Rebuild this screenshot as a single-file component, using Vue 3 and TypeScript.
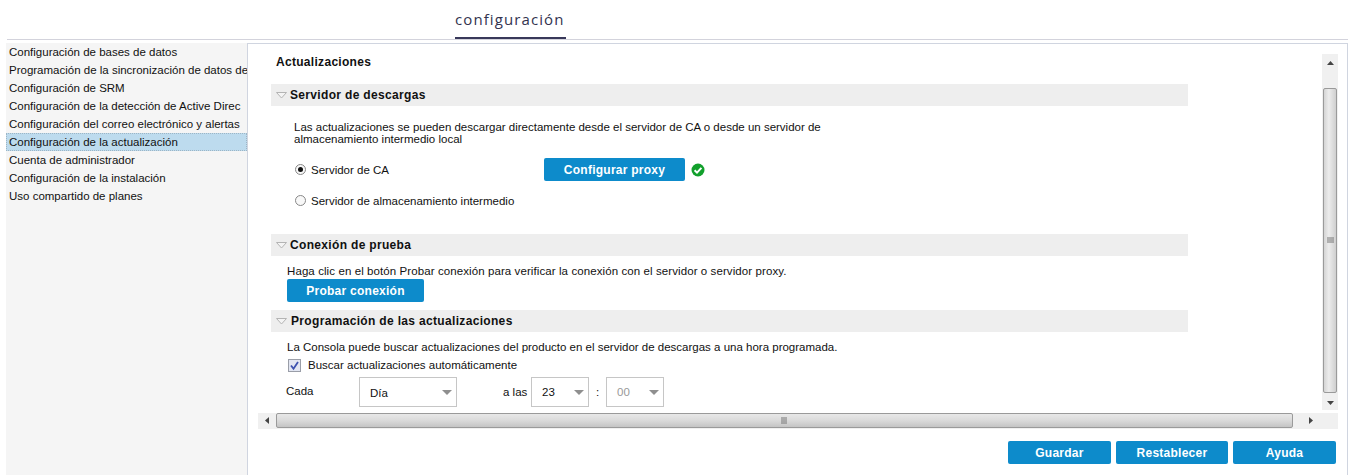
<script setup lang="ts">
const menu: string[] = [
  'Configuración de bases de datos',
  'Programación de la sincronización de datos de',
  'Configuración de SRM',
  'Configuración de la detección de Active Direc',
  'Configuración del correo electrónico y alertas',
  'Configuración de la actualización',
  'Cuenta de administrador',
  'Configuración de la instalación',
  'Uso compartido de planes',
]
const activeIndex = 5
</script>

<template>
  <div class="page">
    <header class="top">
      <div class="tab">configuración</div>
    </header>
    <div class="main">
      <nav class="side">
        <div
          v-for="(m, i) in menu"
          :key="m"
          class="item"
          :class="{ active: i === activeIndex }"
        >{{ m }}</div>
      </nav>
      <section class="panel">
        <div class="frame">
          <div class="frame-row">
            <div class="content">
              <h1 class="title">Actualizaciones</h1>

              <div class="bar first">
                <svg class="tri" width="11" height="7" viewBox="0 0 11 7"><path d="M0.5 0.5H10.5L5.5 6Z" fill="#f4f4f4" stroke="#b4b4b4"/></svg>
                <span>Servidor de descargas</span>
              </div>
              <p class="desc">Las actualizaciones se pueden descargar directamente desde el servidor de CA o desde un servidor de<br>almacenamiento intermedio local</p>
              <div class="radio-row one">
                <span class="radio on"></span>
                <span class="radio-label">Servidor de CA</span>
                <button class="btn proxy">Configurar proxy</button>
                <svg class="ok" width="14" height="14" viewBox="0 0 14 14"><circle cx="7" cy="7" r="6.5" fill="#12a02c"/><path d="M3.6 7.2L6 9.6L10.4 4.9" fill="none" stroke="#fff" stroke-width="2"/></svg>
              </div>
              <div class="radio-row two">
                <span class="radio"></span>
                <span class="radio-label">Servidor de almacenamiento intermedio</span>
              </div>

              <div class="bar second">
                <svg class="tri" width="11" height="7" viewBox="0 0 11 7"><path d="M0.5 0.5H10.5L5.5 6Z" fill="#f4f4f4" stroke="#b4b4b4"/></svg>
                <span>Conexión de prueba</span>
              </div>
              <p class="plain test">Haga clic en el botón Probar conexión para verificar la conexión con el servidor o servidor proxy.</p>
              <button class="btn test-btn">Probar conexión</button>

              <div class="bar third">
                <svg class="tri" width="11" height="7" viewBox="0 0 11 7"><path d="M0.5 0.5H10.5L5.5 6Z" fill="#f4f4f4" stroke="#b4b4b4"/></svg>
                <span>Programación de las actualizaciones</span>
              </div>
              <p class="plain sched">La Consola puede buscar actualizaciones del producto en el servidor de descargas a una hora programada.</p>
              <div class="check-row">
                <svg class="check" width="13" height="13" viewBox="0 0 13 13"><rect x="0.5" y="0.5" width="12" height="12" fill="#e2e6f2" stroke="#9a9ea8"/><path d="M3 6.5L5.5 9.8L10 3" fill="none" stroke="#3d52b0" stroke-width="1.8"/></svg>
                <span>Buscar actualizaciones automáticamente</span>
              </div>
              <div class="time-row">
                <span class="cada">Cada</span>
                <div class="select day"><span>Día</span><i class="caret"></i></div>
                <span class="alas">a las</span>
                <div class="select num"><span>23</span><i class="caret"></i></div>
                <span class="colon">:</span>
                <div class="select num off"><span>00</span><i class="caret"></i></div>
              </div>
            </div>
            <div class="vscroll">
              <div class="arrow-v"><svg width="7" height="4" viewBox="0 0 7 4"><path d="M3.5 0L7 4H0Z" fill="#444"/></svg></div>
              <div class="vthumb"><svg width="7" height="7" viewBox="0 0 7 7"><path d="M0 1H7M0 3H7M0 5H7" stroke="#777"/></svg></div>
              <div class="arrow-v"><svg width="7" height="4" viewBox="0 0 7 4"><path d="M0 0H7L3.5 4Z" fill="#444"/></svg></div>
            </div>
          </div>
          <div class="hscroll">
            <div class="arrow-h"><svg width="4" height="7" viewBox="0 0 4 7"><path d="M4 0V7L0 3.5Z" fill="#444"/></svg></div>
            <div class="hthumb"><svg width="7" height="7" viewBox="0 0 7 7"><path d="M1 0V7M3 0V7M5 0V7" stroke="#777"/></svg></div>
            <div class="arrow-h"><svg width="4" height="7" viewBox="0 0 4 7"><path d="M0 0L4 3.5L0 7Z" fill="#444"/></svg></div>
            <div class="corner"></div>
          </div>
        </div>
        <div class="actions">
          <button class="btn act guardar">Guardar</button>
          <button class="btn act rest">Restablecer</button>
          <button class="btn act guardar">Ayuda</button>
        </div>
      </section>
    </div>
  </div>
</template>

<style scoped>
.page {
  width: 1349px;
  height: 475px;
  overflow: hidden;
  display: flex;
  flex-direction: column;
  background: #fff;
  color: #111;
  font-family: "Liberation Sans", Arial, sans-serif;
  font-size: 11.5px;
}
.top {
  height: 40px;
  margin-left: 7px;
  width: 1341px;
  box-sizing: border-box;
  border-bottom: 1px solid #d3d3dc;
  padding-left: 448px;
  flex: none;
}
.tab {
  width: 111px;
  height: 39px;
  box-sizing: border-box;
  border-bottom: 2px solid #38385a;
  font-family: "Open Sans", sans-serif;
  font-size: 15px;
  font-weight: 500;
  letter-spacing: 1.1px;
  line-height: 38px;
  color: #33334f;
  white-space: nowrap;
}
.main {
  flex: 1;
  display: flex;
  margin-top: 3px;
  margin-left: 6px;
  min-height: 0;
}
.side {
  width: 241px;
  flex: none;
  background: #f5f5f5;
  overflow: hidden;
  box-sizing: border-box;
}
.item {
  height: 18px;
  line-height: 18px;
  padding-left: 3px;
  white-space: nowrap;
  box-sizing: border-box;
  color: #111;
}
.item.active {
  background: #bddbee;
  outline: 1px dotted #9db5c5;
  outline-offset: -1px;
}
.panel {
  width: 1101px;
  flex: none;
  box-sizing: border-box;
  border-left: 1px solid #d0d5e0;
  border-top: 1px solid #d0d5e0;
  border-right: 1px solid #d0d5e0;
  padding: 10px 11px 0 10px;
  display: flex;
  flex-direction: column;
}
.frame {
  width: 1080px;
  flex: none;
}
.frame-row {
  display: flex;
  height: 356px;
}
.content {
  width: 1064px;
  flex: none;
  padding-left: 13px;
  box-sizing: border-box;
}
.title {
  margin: 0;
  padding: 1px 0 0 5px;
  font-size: 12px;
  line-height: 14px;
  font-weight: 700;
  letter-spacing: 0.3px;
}
.bar {
  width: 917px;
  height: 22px;
  background: #eeeeee;
  display: flex;
  align-items: center;
  font-size: 12px;
  font-weight: 700;
  letter-spacing: 0.33px;
  color: #111;
}
.bar span { margin-left: 3px; }
.third span { margin-left: 4px; }
.tri { margin-left: 5px; flex: none; }
.first { margin-top: 15px; }
.second { margin-top: 22px; }
.third { margin-top: 8px; }
.desc {
  margin: 15px 0 0 23px;
  line-height: 12px;
}
.radio-row {
  display: flex;
  align-items: center;
  height: 23px;
  margin-left: 24px;
}
.one { margin-top: 13px; }
.two { margin-top: 8px; }
.radio {
  width: 11px;
  height: 11px;
  box-sizing: border-box;
  border: 1px solid #888;
  border-radius: 50%;
  background: #f8f8f8;
  position: relative;
  flex: none;
}
.radio.on::after {
  content: "";
  position: absolute;
  left: 2px;
  top: 2px;
  width: 5px;
  height: 5px;
  border-radius: 50%;
  background: #111;
}
.radio-label { margin-left: 5px; white-space: nowrap; }
.btn {
  background: #0d8bcb;
  border: none;
  border-radius: 2px;
  color: #fff;
  font-family: "Liberation Sans", Arial, sans-serif;
  font-size: 12px;
  font-weight: 700;
  letter-spacing: 0.25px;
  padding: 0;
  height: 23px;
  display: block;
}
.proxy {
  width: 141px;
  margin-left: 155px;
}
.ok { margin-left: 6px; }
.plain {
  margin: 0;
  line-height: 14px;
  white-space: nowrap;
}
.test { margin: 8px 0 0 16px; letter-spacing: 0.09px; }
.test-btn { width: 137px; margin: 1px 0 0 16px; }
.sched { margin: 8px 0 0 16px; }
.check-row {
  display: flex;
  align-items: center;
  height: 14px;
  margin: 4px 0 0 17px;
}
.check { flex: none; }
.check-row span { margin-left: 7px; }
.time-row {
  display: flex;
  align-items: center;
  height: 30px;
  margin: 5px 0 0 15px;
}
.cada { width: 73px; flex: none; margin-bottom: 2px; }
.select {
  height: 30px;
  box-sizing: border-box;
  border: 1px solid #c6c6c6;
  background: #fff;
  display: flex;
  align-items: center;
  justify-content: space-between;
  flex: none;
}
.day { width: 98px; padding: 1px 4px 0 10px; }
.num { width: 58px; padding: 0 4px 0 10px; }
.off { color: #999; }
.caret {
  width: 0;
  height: 0;
  border-left: 5px solid transparent;
  border-right: 5px solid transparent;
  border-top: 5px solid #8f8f8f;
}
.alas { margin-left: 46px; width: 28px; flex: none; }
.colon { width: 17px; flex: none; text-align: center; }
.vscroll {
  width: 16px;
  flex: none;
  background: #f0f0f0;
  display: flex;
  flex-direction: column;
}
.arrow-v {
  height: 34px;
  display: flex;
  align-items: flex-start;
  justify-content: center;
  flex: none;
  box-sizing: border-box;
  padding-top: 7px;
}
.arrow-v:last-child { height: 17px; padding-top: 8px; }
.vthumb {
  flex: 1;
  margin: 0 1px;
  border: 1px solid #9a9a9a;
  border-radius: 2px;
  background: linear-gradient(to right, #d4d4d4, #ececec 40%, #cfcfcf);
  display: flex;
  align-items: center;
  justify-content: center;
}
.hscroll {
  display: flex;
  align-items: flex-start;
  height: 16px;
  margin-top: 3px;
  background: #f0f0f0;
}
.arrow-h {
  width: 18px;
  height: 15px;
  flex: none;
  display: flex;
  justify-content: center;
  align-items: center;
}
.arrow-h:nth-child(3) { width: 29px; padding-left: 6px; box-sizing: border-box; }
.hthumb {
  flex: 1;
  height: 15px;
  box-sizing: border-box;
  border: 1px solid #9a9a9a;
  border-radius: 2px;
  background: linear-gradient(to bottom, #e8e8e8, #dcdcdc 45%, #c4c4c4);
  display: flex;
  align-items: center;
  justify-content: center;
}
.corner { width: 16px; flex: none; background: #f0f0f0; }
.actions {
  display: flex;
  margin-top: 12px;
  margin-left: 750px;
  gap: 5px;
}
.act.guardar { width: 103px; }
.act.rest { width: 112px; }
</style>
